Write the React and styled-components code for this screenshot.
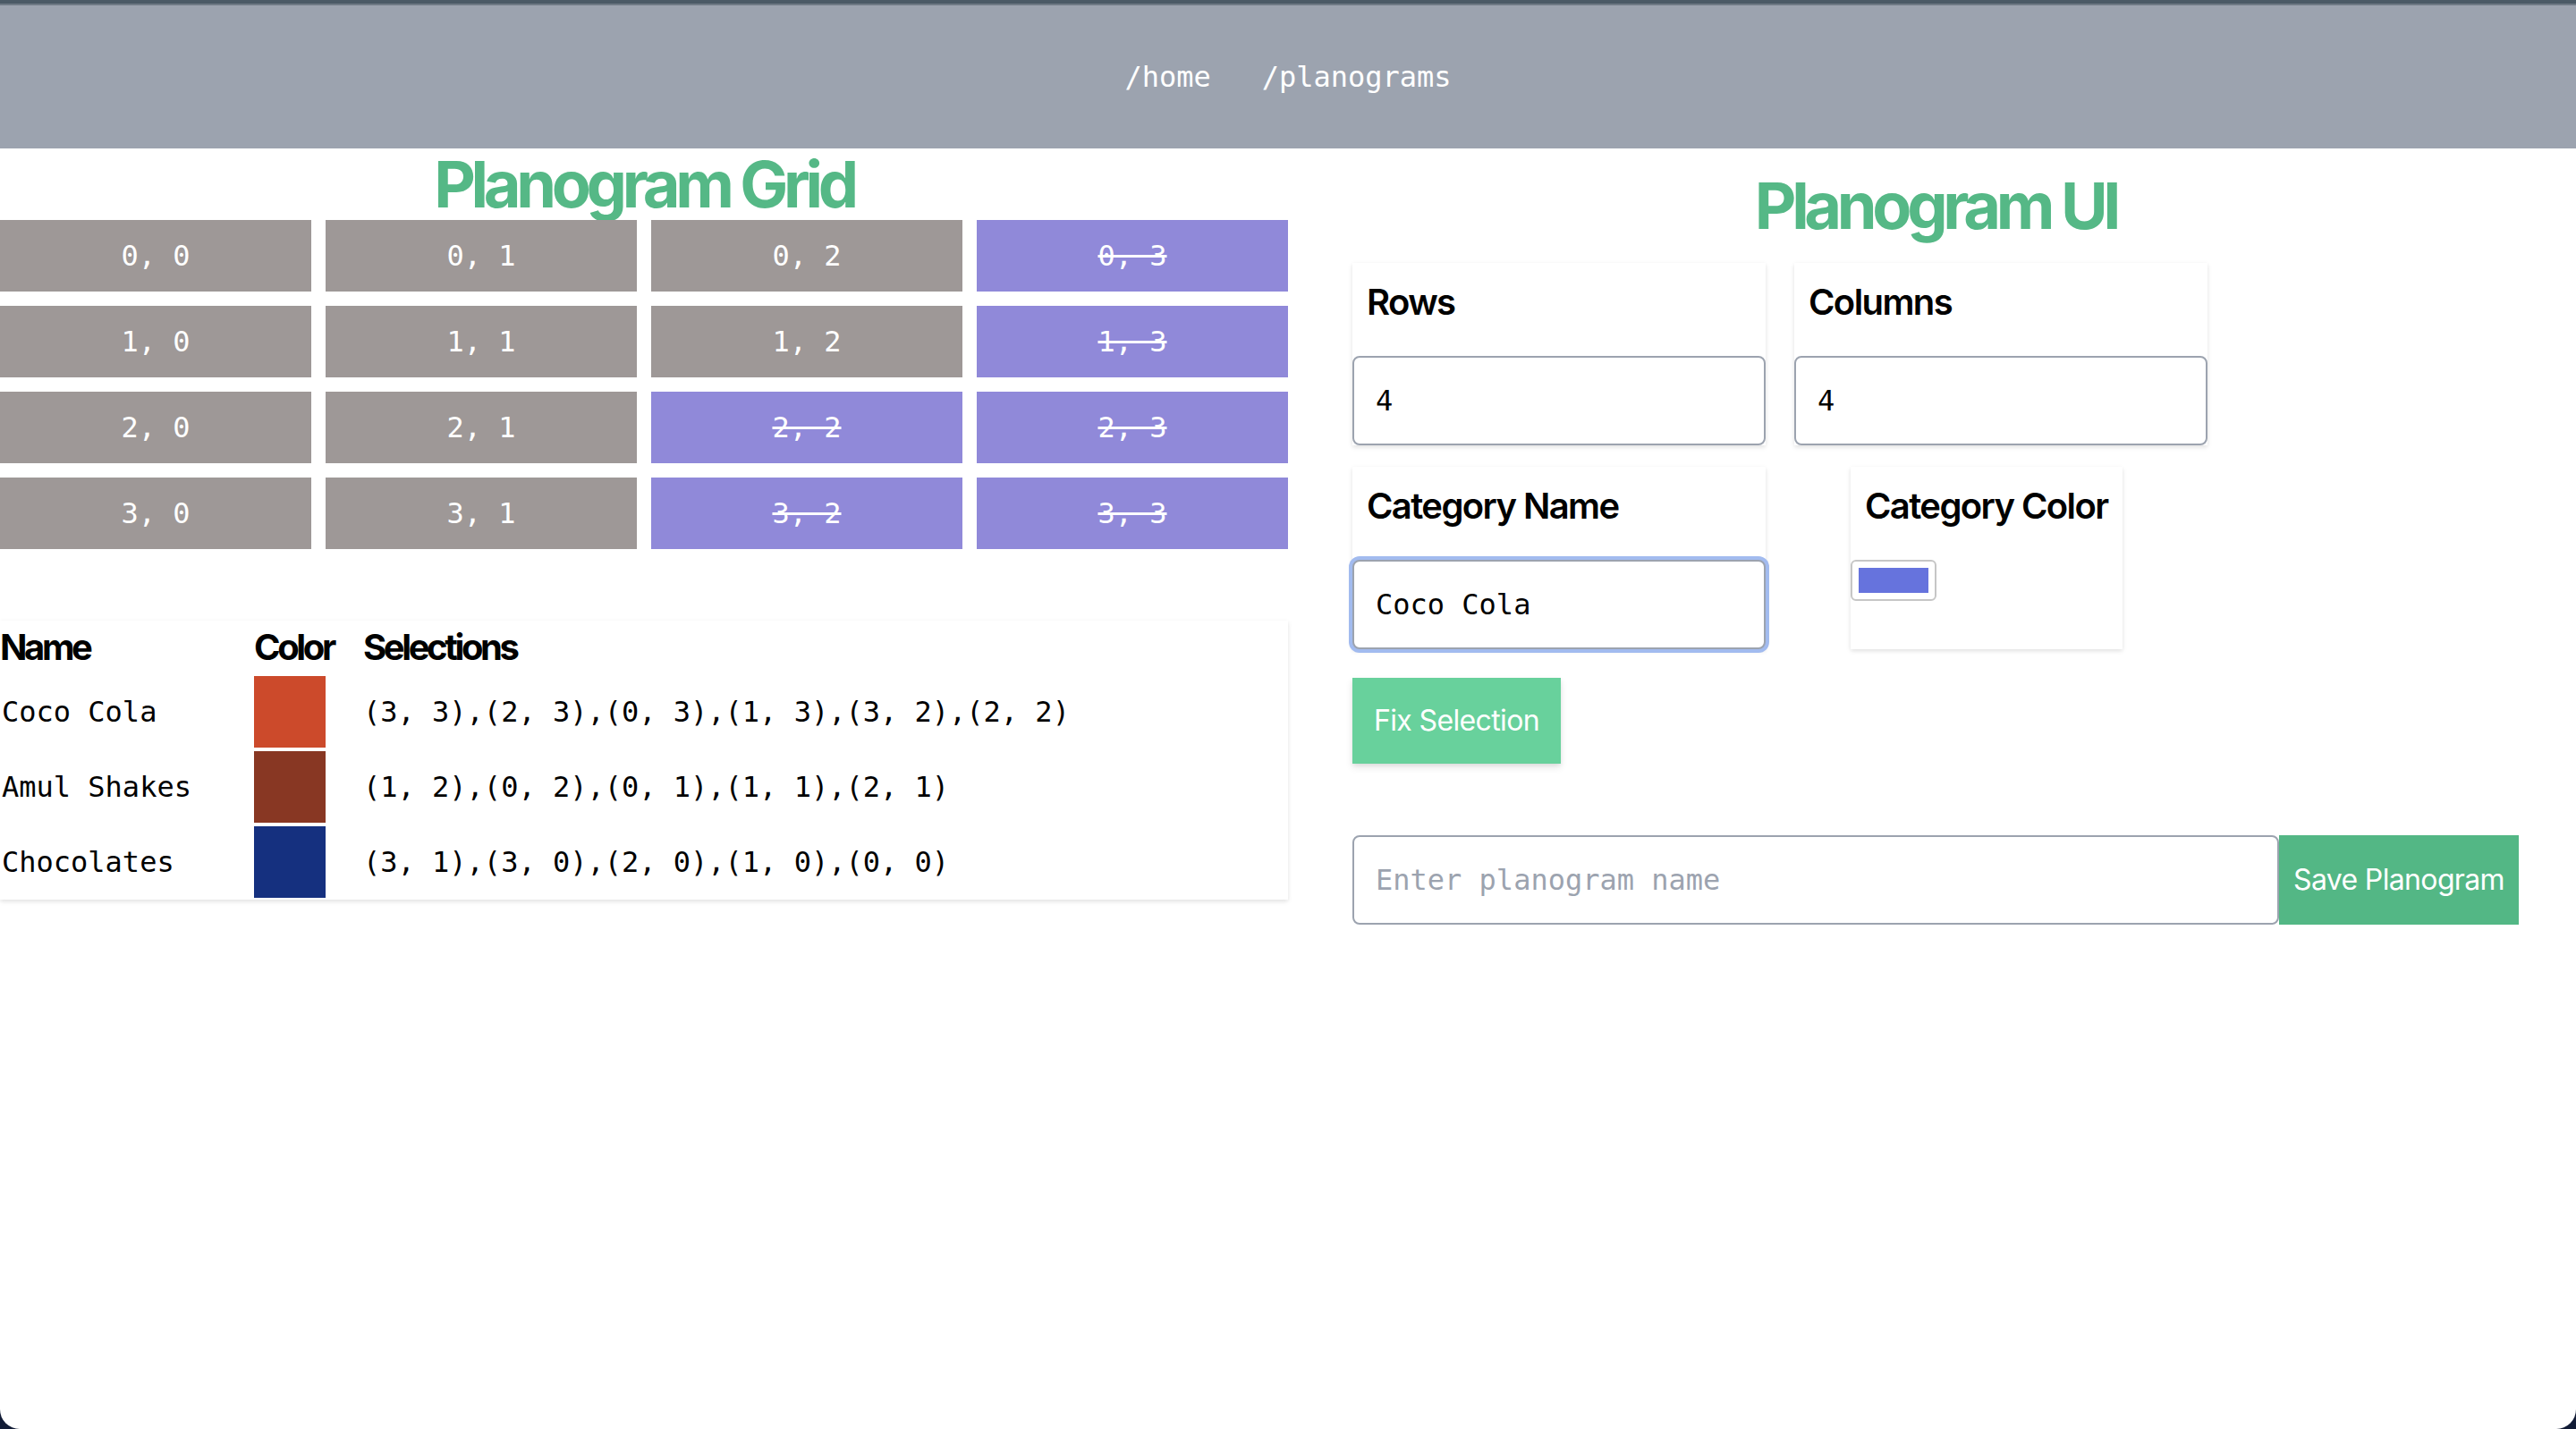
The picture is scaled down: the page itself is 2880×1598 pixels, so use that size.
import React from "react";
import styled, { createGlobalStyle } from "styled-components";

const GlobalStyle = createGlobalStyle`
  html, body {
    margin: 0;
    padding: 0;
    width: 2880px;
    height: 1598px;
    overflow: hidden;
    background: #121c36;
  }
  * { box-sizing: border-box; }
`;

const MONO = `"DejaVu Sans Mono", "Liberation Mono", monospace`;
const SANS = `Inter, "Noto Sans", "Liberation Sans", sans-serif`;

const Window = styled.div`
  width: 2880px;
  height: 1598px;
  background: #ffffff;
  border-radius: 0 0 22px 22px;
  overflow: hidden;
  display: flex;
  flex-direction: column;
`;

const TopStrip = styled.div`
  height: 6px;
  background: #4b5a66;
  border-bottom: 2px solid #6f7a85;
`;

const Header = styled.header`
  height: 160px;
  background: #9ca3af;
  display: flex;
  align-items: center;
  justify-content: center;
  gap: 57px;
`;

const NavLink = styled.a`
  font-family: ${MONO};
  font-size: 32px;
  line-height: 48px;
  color: #ffffff;
  text-decoration: none;
`;

const Main = styled.main`
  display: grid;
  grid-template-columns: 1440px 1440px;
  align-items: start;
`;

const LeftColumn = styled.section`
  display: flex;
  flex-direction: column;
`;

const RightColumn = styled.section`
  display: flex;
  flex-direction: column;
  padding: 24px 64px 0 72px;
`;

const Title = styled.h1`
  margin: 0 0 ${(p) => p.$mb || 0}px;
  font-family: ${SANS};
  font-size: 72px;
  line-height: 80px;
  font-weight: 700;
  letter-spacing: -0.074em;
  color: #55b886;
  text-align: center;
`;

const CellGrid = styled.div`
  display: grid;
  grid-template-columns: repeat(4, 348px);
  grid-auto-rows: 80px;
  gap: 16px;
`;

const Cell = styled.div`
  display: flex;
  align-items: center;
  justify-content: center;
  background: ${(p) => (p.$selected ? "#9089d9" : "#9e9897")};
  color: #ffffff;
  font-family: ${MONO};
  font-size: 32px;
  text-decoration: ${(p) => (p.$selected ? "line-through" : "none")};
`;

const TableCard = styled.div`
  margin-top: 80px;
  width: 1440px;
  padding: 2px 0;
  background: #ffffff;
  box-shadow: 0 2px 6px rgba(0, 0, 0, 0.08), 0 2px 4px rgba(0, 0, 0, 0.05);
  display: grid;
  grid-template-columns: 284px 122px 1fr;
  grid-template-rows: 56px;
  grid-auto-rows: 80px;
  row-gap: 4px;
`;

const HeadCell = styled.div`
  font-family: ${SANS};
  font-size: 40px;
  line-height: 56px;
  font-weight: 700;
  letter-spacing: -0.085em;
  color: #000000;
`;

const BodyCell = styled.div`
  display: flex;
  align-items: center;
  font-family: ${MONO};
  font-size: 32px;
  color: #000000;
  white-space: pre;
  padding-left: ${(p) => p.$pl || 0}px;
`;

const Swatch = styled.div`
  width: 80px;
  height: 80px;
  background: ${(p) => p.$color};
`;

const FieldRow = styled.div`
  display: flex;
  align-items: stretch;
  gap: ${(p) => p.$gap}px;
  margin-bottom: 24px;
`;

const Card = styled.div`
  width: ${(p) => p.$w}px;
  background: #ffffff;
  box-shadow: 0 2px 6px rgba(0, 0, 0, 0.08), 0 2px 4px rgba(0, 0, 0, 0.05);
  display: flex;
  flex-direction: column;
`;

const Label = styled.label`
  display: block;
  padding: 16px;
  margin-bottom: 16px;
  font-family: ${SANS};
  font-size: 40px;
  line-height: 56px;
  font-weight: 600;
  letter-spacing: -0.04em;
  color: #000000;
  white-space: nowrap;
`;

const TextInput = styled.input`
  display: block;
  width: 100%;
  flex: 1 1 auto;
  min-width: 0;
  height: 100px;
  padding: 0 24px;
  border: 2px solid #9ca3af;
  border-radius: 8px;
  font-family: ${MONO};
  font-size: 32px;
  color: #000000;
  background: #ffffff;
  outline: none;
  caret-color: #000000;
  box-shadow: ${(p) => (p.$focused ? "0 0 0 4px #a2bbef" : "none")};
  &::placeholder {
    color: #9ca3af;
  }
`;

const ColorInput = styled.input`
  display: block;
  width: 96px;
  height: 46px;
  padding: 7px;
  border: 2px solid #c6c6c6;
  border-radius: 6px;
  background: #ffffff;
  -webkit-appearance: none;
  appearance: none;
  cursor: pointer;
  &::-webkit-color-swatch-wrapper {
    padding: 0;
  }
  &::-webkit-color-swatch {
    border: none;
    border-radius: 0;
  }
`;

const Button = styled.button`
  font-family: ${SANS};
  font-size: 32px;
  line-height: 48px;
  letter-spacing: -0.02em;
  color: #ffffff;
  border: none;
  border-radius: 0;
  cursor: pointer;
  background: ${(p) => p.$bg};
  padding: ${(p) => p.$pad};
  white-space: nowrap;
  flex: none;
`;

const FixButton = styled(Button)`
  align-self: flex-start;
  margin-top: 8px;
  box-shadow: 0 4px 8px rgba(0, 0, 0, 0.1), 0 2px 4px rgba(0, 0, 0, 0.06);
`;

const SaveRow = styled.div`
  display: flex;
  align-items: stretch;
  margin-top: 80px;
`;

const ROWS = 4;
const COLS = 4;
const selected = new Set(["0,3", "1,3", "2,2", "2,3", "3,2", "3,3"]);

const categories = [
  { name: "Coco Cola", color: "#cc4a2b", sel: "(3, 3),(2, 3),(0, 3),(1, 3),(3, 2),(2, 2)" },
  { name: "Amul Shakes", color: "#883723", sel: "(1, 2),(0, 2),(0, 1),(1, 1),(2, 1)" },
  { name: "Chocolates", color: "#15307f", sel: "(3, 1),(3, 0),(2, 0),(1, 0),(0, 0)" },
];

export default function App() {
  const cells = [];
  for (let r = 0; r < ROWS; r++) {
    for (let c = 0; c < COLS; c++) {
      cells.push(
        <Cell key={`${r}-${c}`} $selected={selected.has(`${r},${c}`)}>
          {`${r}, ${c}`}
        </Cell>
      );
    }
  }

  return (
    <>
      <GlobalStyle />
      <Window>
        <TopStrip />
        <Header>
          <NavLink href="#">/home</NavLink>
          <NavLink href="#">/planograms</NavLink>
        </Header>
        <Main>
          <LeftColumn>
            <Title>Planogram Grid</Title>
            <CellGrid>{cells}</CellGrid>
            <TableCard>
              <HeadCell>Name</HeadCell>
              <HeadCell>Color</HeadCell>
              <HeadCell>Selections</HeadCell>
              {categories.map((cat) => (
                <React.Fragment key={cat.name}>
                  <BodyCell $pl={2}>{cat.name}</BodyCell>
                  <BodyCell>
                    <Swatch $color={cat.color} />
                  </BodyCell>
                  <BodyCell>{cat.sel}</BodyCell>
                </React.Fragment>
              ))}
            </TableCard>
          </LeftColumn>

          <RightColumn>
            <Title $mb={24}>Planogram UI</Title>
            <FieldRow $gap={32}>
              <Card $w={462}>
                <Label>Rows</Label>
                <TextInput type="text" defaultValue="4" />
              </Card>
              <Card $w={462}>
                <Label>Columns</Label>
                <TextInput type="text" defaultValue="4" />
              </Card>
            </FieldRow>
            <FieldRow $gap={95}>
              <Card $w={462}>
                <Label>Category Name</Label>
                <TextInput type="text" defaultValue="Coco Cola" $focused autoFocus />
              </Card>
              <Card $w={304}>
                <Label>Category Color</Label>
                <ColorInput type="color" defaultValue="#6673dd" />
              </Card>
            </FieldRow>
            <FixButton $bg="#68d19c" $pad="24px">Fix Selection</FixButton>
            <SaveRow>
              <TextInput type="text" placeholder="Enter planogram name" />
              <Button $bg="#53b785" $pad="0 16px">Save Planogram</Button>
            </SaveRow>
          </RightColumn>
        </Main>
      </Window>
    </>
  );
}
